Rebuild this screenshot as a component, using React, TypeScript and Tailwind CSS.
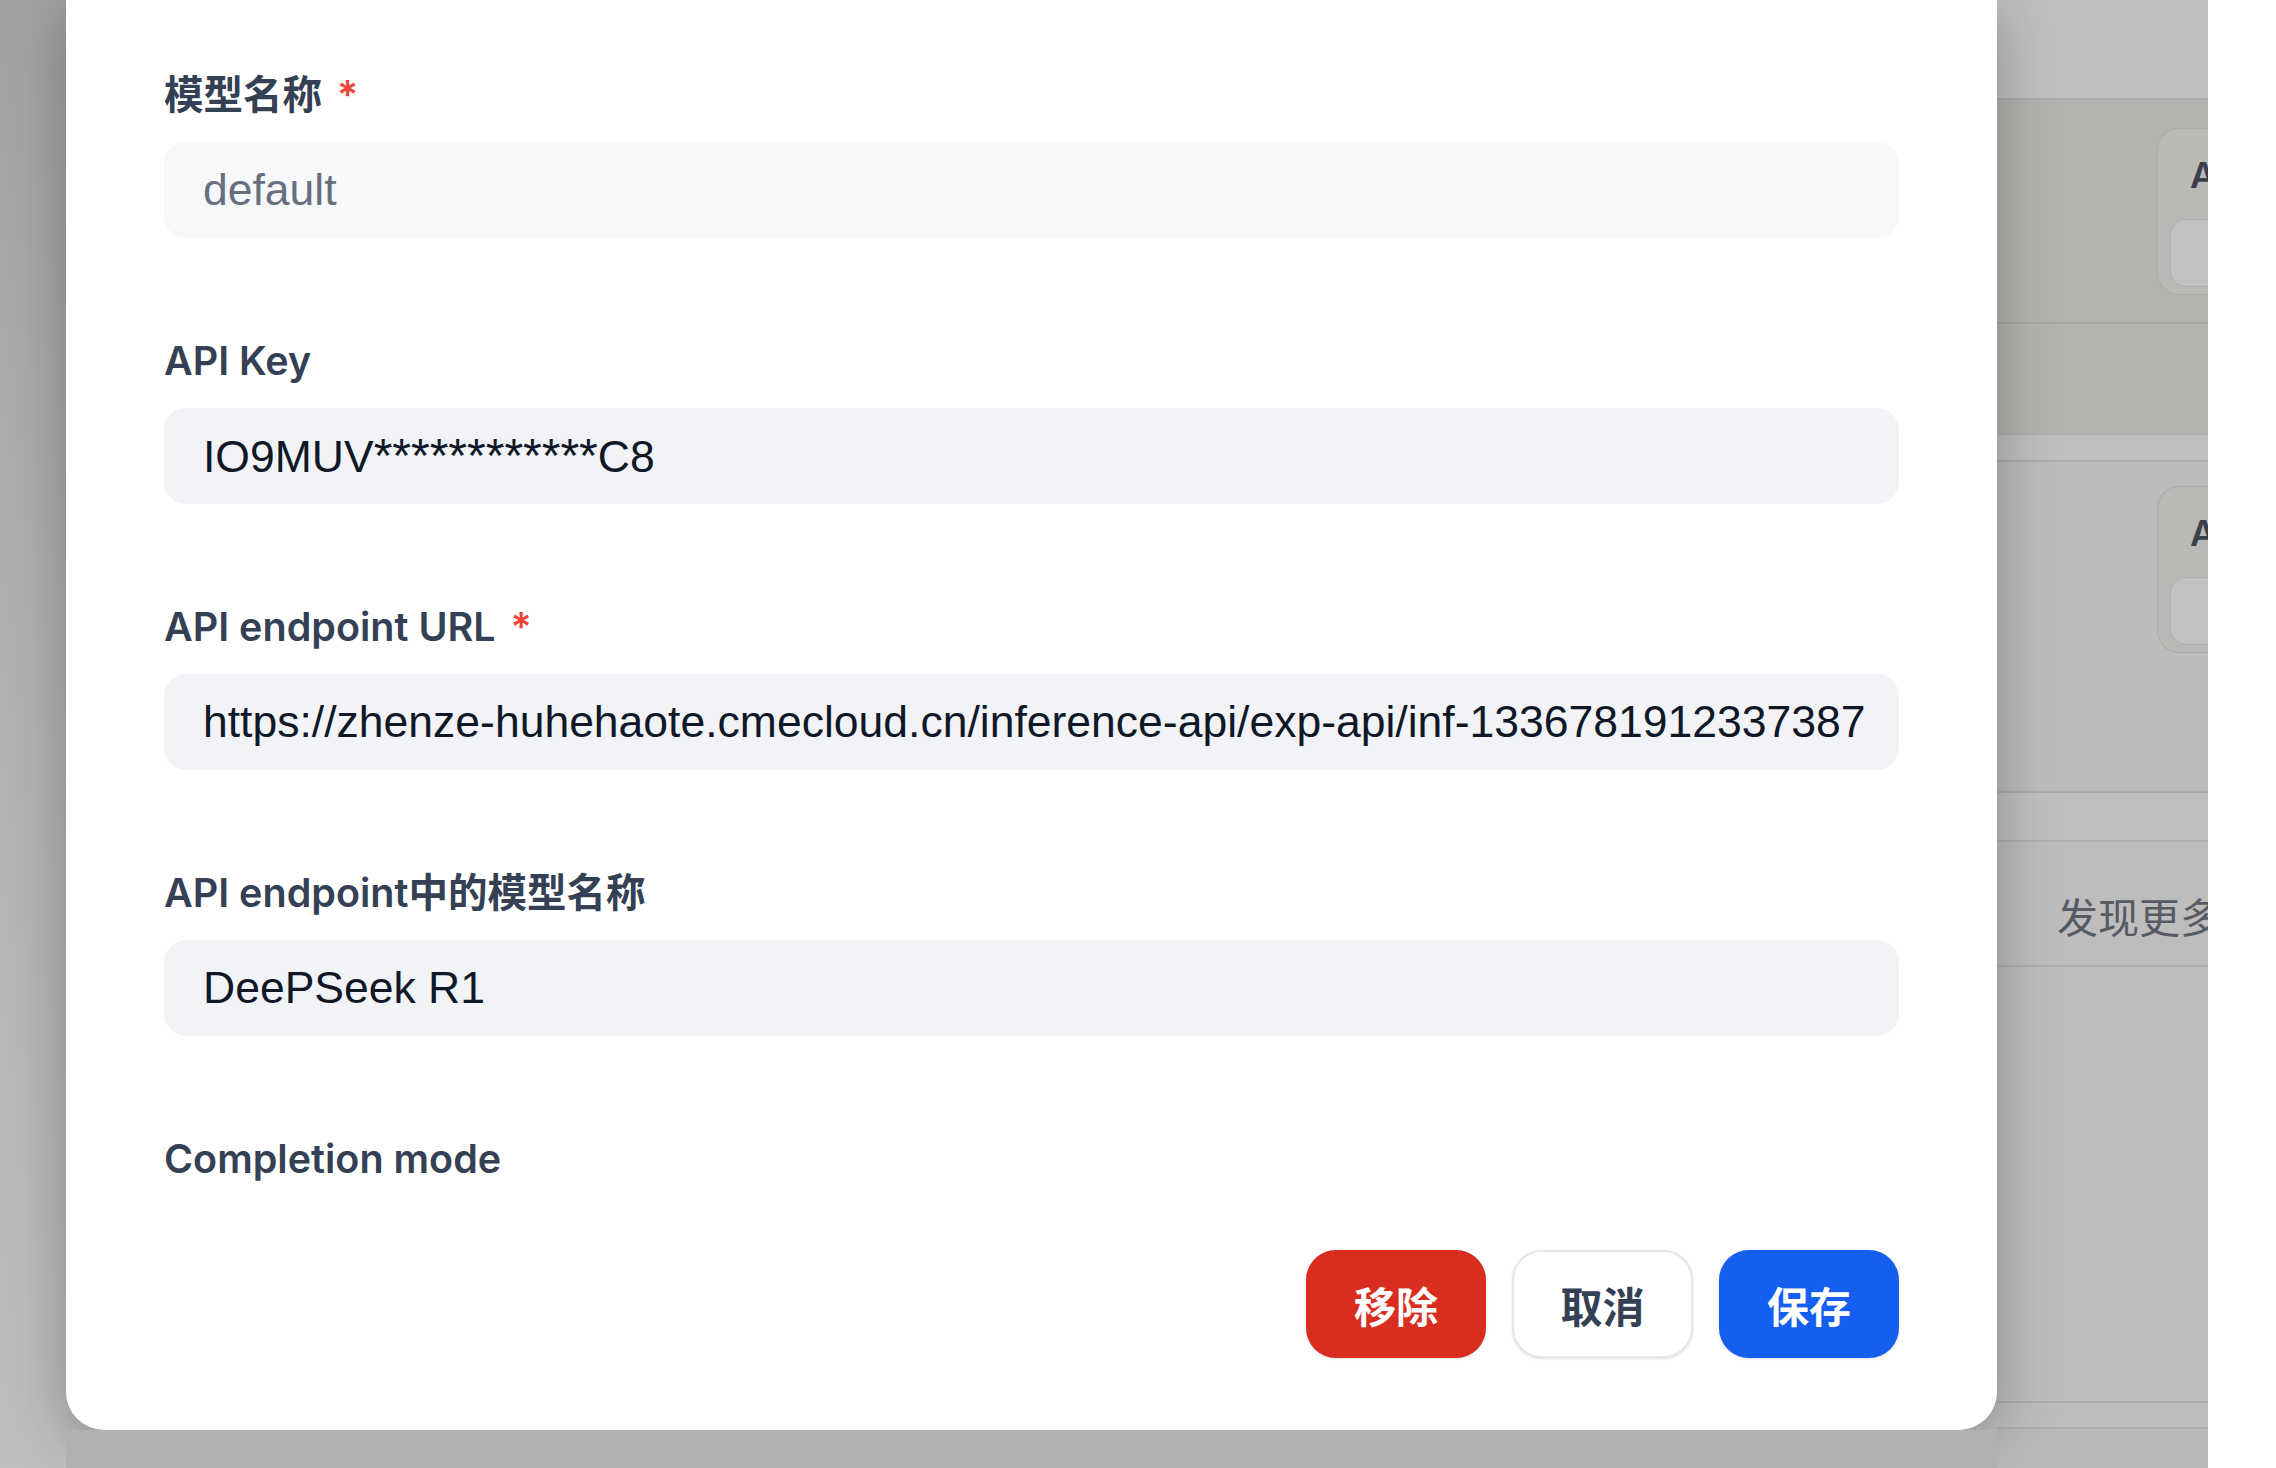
import React from 'react';

const labelFont = { fontFamily: 'Inter, "Noto Sans CJK SC", sans-serif' };

interface FieldProps {
  label: string;
  required?: boolean;
  value: React.ReactNode;
  muted?: boolean;
}

const Field: React.FC<FieldProps> = ({ label, required, value, muted }) => {
  return (
    <div className="flex flex-col">
      <div
        className="h-[50px] flex items-center text-[39.5px] font-semibold text-[#344054] leading-none"
        style={labelFont}
      >
        <span>{label}</span>
        {required && <span className="ml-[15px] text-[#f04438]">*</span>}
      </div>
      <div
        className={`mt-[21px] h-[96px] rounded-[22px] px-[39px] flex items-center overflow-hidden ${
          muted ? 'bg-[#f7f8fa]' : 'bg-[#f1f3f6]'
        }`}
      >
        <span
          className={`whitespace-nowrap text-[44.5px] leading-none font-['Liberation_Sans',sans-serif] ${
            muted ? 'text-[#676f7e]' : 'text-[#101828]'
          }`}
        >
          {value}
        </span>
      </div>
    </div>
  );
};

// dimmed page content peeking out on the right of the dialog
const BackgroundPanel: React.FC<{ cardTop: number }> = ({ cardTop }) => (
  <div className="h-[222px] pl-[160px] flex flex-col" style={{ paddingTop: cardTop }}>
    <div className="h-[167px] rounded-l-[22px] border border-r-0 border-[#ababab] bg-[#b9b9b6] pl-[32px] pt-[28px] flex flex-col">
      <span className="text-[36px] font-semibold text-[#3a3f4b] leading-none" style={labelFont}>
        A
      </span>
      <div className="mt-[26px] ml-[-20px] h-[68px] rounded-l-[16px] border border-r-0 border-[#b0b0b0] bg-[#c2c2c2]" />
    </div>
  </div>
);

const App: React.FC = () => {
  return (
    <div className="w-[2276px] h-[1468px] flex overflow-hidden bg-[#bdbdbd]">
      {/* left strip of the overlay */}
      <div className="w-[66px] h-full bg-gradient-to-b from-[#a2a2a2] via-[#b3b3b3] to-[#bfbfbf]" />

      {/* dialog */}
      <div className="w-[1931px] h-full flex flex-col relative z-10">
        <div className="h-[1430px] bg-white rounded-b-[38px] shadow-[0_10px_60px_rgba(0,0,0,0.28)] px-[98px] pt-[71px] flex flex-col">
          <div className="flex flex-col gap-[99px]">
            <Field label="模型名称" required value="default" muted />
            <Field
              label="API Key"
              value={
                <>
                  IO9MUV<span className="text-[48px]">************</span>C8
                </>
              }
            />
            <Field label="API endpoint URL" required value="https://zhenze-huhehaote.cmecloud.cn/inference-api/exp-api/inf-1336781912337387" />
            <Field label="API endpoint中的模型名称" value="DeePSeek R1" />
            <div
              className="h-[50px] flex items-center text-[39.5px] font-semibold text-[#344054] leading-none"
              style={labelFont}
            >
              Completion mode
            </div>
          </div>

          <div className="mt-[65px] flex justify-end gap-[26px]">
            <button className="w-[180px] h-[108px] rounded-[30px] bg-[#d92d20] text-white text-[42px] font-bold font-['Noto_Sans_CJK_SC',sans-serif] shadow-sm">
              移除
            </button>
            <button className="w-[181px] h-[108px] rounded-[30px] bg-white border-2 border-[#e4e7ec] text-[#344054] text-[42px] font-bold font-['Noto_Sans_CJK_SC',sans-serif] shadow-sm">
              取消
            </button>
            <button className="w-[180px] h-[108px] rounded-[30px] bg-[#155eef] text-white text-[42px] font-bold font-['Noto_Sans_CJK_SC',sans-serif] shadow-sm">
              保存
            </button>
          </div>
        </div>
        <div className="flex-1 bg-[#b1b1b1]" />
      </div>

      {/* right side of the page behind the overlay, cut off by the window edge */}
      <div className="w-[211px] h-full flex flex-col overflow-hidden bg-[#bdbdbd]">
        <div className="h-[100px] shrink-0 bg-[#c0c0c0] border-b-2 border-[#aaaaaa]" />
        <div className="h-[224px] shrink-0 bg-[#b3b3af] border-b-2 border-[#a8a8a6]">
          <BackgroundPanel cardTop={28} />
        </div>
        <div className="h-[109px] shrink-0 bg-[#b3b3af]" />
        <div className="h-[29px] shrink-0 bg-[#bfbfbf] border-y-2 border-[#acacac]" />
        <div className="h-[329px] shrink-0 bg-[#bcbcbc]">
          <BackgroundPanel cardTop={24} />
        </div>
        <div className="h-[51px] shrink-0 bg-[#bfbfbf] border-y-2 border-[#adadad]" />
        <div className="h-[125px] shrink-0 flex items-center pt-[24px] pl-[60px] border-b-2 border-[#b0b0b0]">
          <span className="whitespace-nowrap text-[41px] text-[#555a63] font-['Noto_Sans_CJK_SC',sans-serif] leading-none">
            发现更多
          </span>
        </div>
        <div className="h-[436px] shrink-0 bg-[#bdbdbd] border-b-2 border-[#adadad]" />
        <div className="h-[26px] shrink-0 bg-[#bdbdbd] border-b-2 border-[#adadad]" />
        <div className="flex-1 bg-[#b9b9b9]" />
      </div>

      {/* white edge of the screenshot */}
      <div className="flex-1 h-full bg-white" />
    </div>
  );
};

export default App;
